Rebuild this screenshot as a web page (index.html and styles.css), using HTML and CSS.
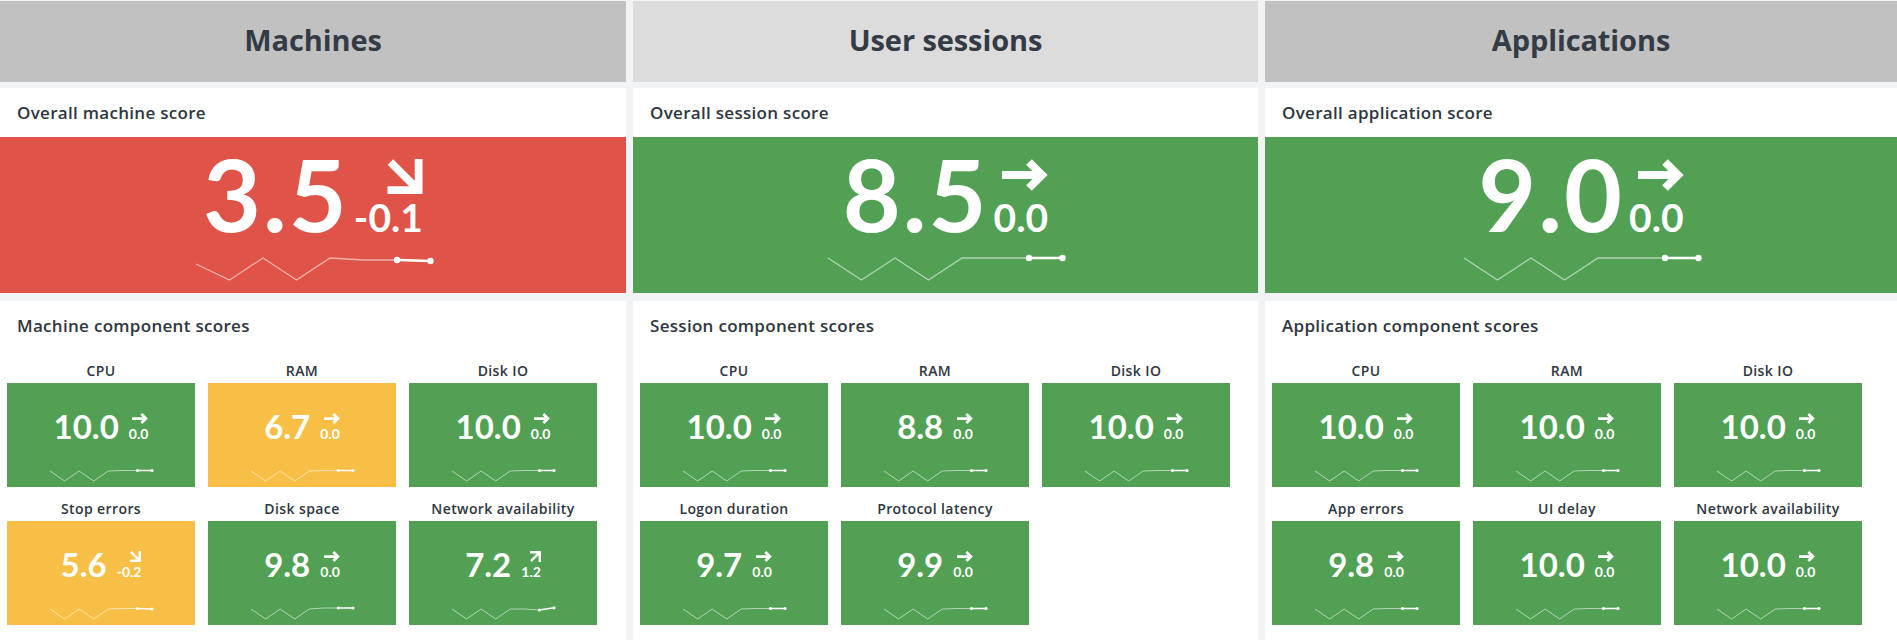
FILE: index.html
```html
<!DOCTYPE html>
<html lang="en">
<head>
<meta charset="utf-8">
<title>Scores</title>
<link rel="stylesheet" href="styles.css">
</head>
<body>
<svg class="defs" width="0" height="0" aria-hidden="true">
  <symbol id="arr-right" viewBox="0 0 46 32"><path d="M0 16 H40 M27 3 L40 16 L27 29" fill="none" stroke="#fff" stroke-width="8"/></symbol>
  <symbol id="arr-down" viewBox="0 0 36 36"><path d="M32 0 V32 H0 M3 3 L29 29" fill="none" stroke="#fff" stroke-width="8"/></symbol>
  <symbol id="arr-up" viewBox="0 0 36 36"><path d="M0 4 H32 V36 M3 33 L29 7" fill="none" stroke="#fff" stroke-width="8"/></symbol>
</svg>
<div class="board">
  <!-- Machines -->
  <section class="col">
    <header class="col-head">Machines</header>
    <div class="card overall">
      <div class="card-title">Overall machine score</div>
      <div class="score-big red">
        <div class="big-line"><span class="big-num">3.5</span><span class="big-delta"><svg class="arr-big-diag"><use href="#arr-down"/></svg><span>-0.1</span></span></div>
        <svg class="spark-big" viewBox="0 0 237 26"><polyline class="sl" points="1,9 34.5,25 68,3 101.5,25 135,3 168.5,5 202,5"/><line class="sh" x1="202" y1="5" x2="235.5" y2="6"/><circle cx="202" cy="5" r="3.2"/><circle cx="235.5" cy="6" r="3.2"/></svg>
      </div>
    </div>
    <div class="card components">
      <div class="card-title">Machine component scores</div>
      <div class="tiles">
        <div class="tile-item"><div class="tile-label">CPU</div><div class="tile green"><div class="tile-line"><span>10.0</span><span class="small-delta"><svg class="arr-s"><use href="#arr-right"/></svg><span>0.0</span></span></div><svg class="spark-s" viewBox="0 0 104 14"><polyline class="sl" points="1,2 15.6,12 30.1,2 44.7,12 59.3,2 73.9,1.5 88.4,1.5"/><line class="sh" x1="88.4" y1="1.5" x2="103" y2="1.5"/><circle cx="88.4" cy="1.5" r="1.6"/><circle cx="103" cy="1.5" r="1.6"/></svg></div></div>
        <div class="tile-item"><div class="tile-label">RAM</div><div class="tile yellow"><div class="tile-line"><span>6.7</span><span class="small-delta"><svg class="arr-s"><use href="#arr-right"/></svg><span>0.0</span></span></div><svg class="spark-s" viewBox="0 0 104 14"><polyline class="sl" points="1,2 15.6,12 30.1,2 44.7,12 59.3,2 73.9,1.5 88.4,1.5"/><line class="sh" x1="88.4" y1="1.5" x2="103" y2="1.5"/><circle cx="88.4" cy="1.5" r="1.6"/><circle cx="103" cy="1.5" r="1.6"/></svg></div></div>
        <div class="tile-item"><div class="tile-label">Disk IO</div><div class="tile green"><div class="tile-line"><span>10.0</span><span class="small-delta"><svg class="arr-s"><use href="#arr-right"/></svg><span>0.0</span></span></div><svg class="spark-s" viewBox="0 0 104 14"><polyline class="sl" points="1,2 15.6,12 30.1,2 44.7,12 59.3,2 73.9,1.5 88.4,1.5"/><line class="sh" x1="88.4" y1="1.5" x2="103" y2="1.5"/><circle cx="88.4" cy="1.5" r="1.6"/><circle cx="103" cy="1.5" r="1.6"/></svg></div></div>
        <div class="tile-item"><div class="tile-label">Stop errors</div><div class="tile yellow"><div class="tile-line"><span>5.6</span><span class="small-delta"><svg class="arr-sd"><use href="#arr-down"/></svg><span>-0.2</span></span></div><svg class="spark-s" viewBox="0 0 104 14"><polyline class="sl" points="1,2 15.6,12 30.1,2 44.7,12 59.3,2 73.9,1.5 88.4,1.5"/><line class="sh" x1="88.4" y1="1.5" x2="103" y2="2"/><circle cx="88.4" cy="1.5" r="1.6"/><circle cx="103" cy="2" r="1.6"/></svg></div></div>
        <div class="tile-item"><div class="tile-label">Disk space</div><div class="tile green"><div class="tile-line"><span>9.8</span><span class="small-delta"><svg class="arr-s"><use href="#arr-right"/></svg><span>0.0</span></span></div><svg class="spark-s" viewBox="0 0 104 14"><polyline class="sl" points="1,2 15.6,12 30.1,2 44.7,12 59.3,2 73.9,1 88.4,1"/><line class="sh" x1="88.4" y1="1" x2="103" y2="1"/><circle cx="88.4" cy="1" r="1.6"/><circle cx="103" cy="1" r="1.6"/></svg></div></div>
        <div class="tile-item"><div class="tile-label">Network availability</div><div class="tile green"><div class="tile-line"><span>7.2</span><span class="small-delta"><svg class="arr-sd"><use href="#arr-up"/></svg><span>1.2</span></span></div><svg class="spark-s" viewBox="0 0 104 14"><polyline class="sl" points="1,2 15.6,12 30.1,2 44.7,12 59.3,2 73.9,2 88.4,3"/><line class="sh" x1="88.4" y1="3" x2="103" y2="0.8"/><circle cx="88.4" cy="3" r="1.6"/><circle cx="103" cy="0.8" r="1.6"/></svg></div></div>
      </div>
    </div>
  </section>

  <!-- User sessions -->
  <section class="col">
    <header class="col-head light">User sessions</header>
    <div class="card overall">
      <div class="card-title">Overall session score</div>
      <div class="score-big green">
        <div class="big-line"><span class="big-num">8.5</span><span class="big-delta"><svg class="arr-big"><use href="#arr-right"/></svg><span>0.0</span></span></div>
        <svg class="spark-big" viewBox="0 0 237 26"><polyline class="sl" points="1,3 34.5,25 68,3 101.5,25 135,3 168.5,3 202,3"/><line class="sh" x1="202" y1="3" x2="235.5" y2="3"/><circle cx="202" cy="3" r="3.2"/><circle cx="235.5" cy="3" r="3.2"/></svg>
      </div>
    </div>
    <div class="card components">
      <div class="card-title">Session component scores</div>
      <div class="tiles">
        <div class="tile-item"><div class="tile-label">CPU</div><div class="tile green"><div class="tile-line"><span>10.0</span><span class="small-delta"><svg class="arr-s"><use href="#arr-right"/></svg><span>0.0</span></span></div><svg class="spark-s" viewBox="0 0 104 14"><polyline class="sl" points="1,2 15.6,12 30.1,2 44.7,12 59.3,2 73.9,1.5 88.4,1.5"/><line class="sh" x1="88.4" y1="1.5" x2="103" y2="1.5"/><circle cx="88.4" cy="1.5" r="1.6"/><circle cx="103" cy="1.5" r="1.6"/></svg></div></div>
        <div class="tile-item"><div class="tile-label">RAM</div><div class="tile green"><div class="tile-line"><span>8.8</span><span class="small-delta"><svg class="arr-s"><use href="#arr-right"/></svg><span>0.0</span></span></div><svg class="spark-s" viewBox="0 0 104 14"><polyline class="sl" points="1,2 15.6,12 30.1,2 44.7,12 59.3,2 73.9,1.5 88.4,1.5"/><line class="sh" x1="88.4" y1="1.5" x2="103" y2="1.5"/><circle cx="88.4" cy="1.5" r="1.6"/><circle cx="103" cy="1.5" r="1.6"/></svg></div></div>
        <div class="tile-item"><div class="tile-label">Disk IO</div><div class="tile green"><div class="tile-line"><span>10.0</span><span class="small-delta"><svg class="arr-s"><use href="#arr-right"/></svg><span>0.0</span></span></div><svg class="spark-s" viewBox="0 0 104 14"><polyline class="sl" points="1,2 15.6,12 30.1,2 44.7,12 59.3,2 73.9,1.5 88.4,1.5"/><line class="sh" x1="88.4" y1="1.5" x2="103" y2="1.5"/><circle cx="88.4" cy="1.5" r="1.6"/><circle cx="103" cy="1.5" r="1.6"/></svg></div></div>
        <div class="tile-item"><div class="tile-label">Logon duration</div><div class="tile green"><div class="tile-line"><span>9.7</span><span class="small-delta"><svg class="arr-s"><use href="#arr-right"/></svg><span>0.0</span></span></div><svg class="spark-s" viewBox="0 0 104 14"><polyline class="sl" points="1,2 15.6,12 30.1,2 44.7,12 59.3,2 73.9,1.5 88.4,1.5"/><line class="sh" x1="88.4" y1="1.5" x2="103" y2="1.5"/><circle cx="88.4" cy="1.5" r="1.6"/><circle cx="103" cy="1.5" r="1.6"/></svg></div></div>
        <div class="tile-item"><div class="tile-label">Protocol latency</div><div class="tile green"><div class="tile-line"><span>9.9</span><span class="small-delta"><svg class="arr-s"><use href="#arr-right"/></svg><span>0.0</span></span></div><svg class="spark-s" viewBox="0 0 104 14"><polyline class="sl" points="1,2 15.6,12 30.1,2 44.7,12 59.3,2 73.9,1.5 88.4,1.5"/><line class="sh" x1="88.4" y1="1.5" x2="103" y2="1.5"/><circle cx="88.4" cy="1.5" r="1.6"/><circle cx="103" cy="1.5" r="1.6"/></svg></div></div>
      </div>
    </div>
  </section>

  <!-- Applications -->
  <section class="col">
    <header class="col-head">Applications</header>
    <div class="card overall">
      <div class="card-title">Overall application score</div>
      <div class="score-big green">
        <div class="big-line"><span class="big-num">9.0</span><span class="big-delta"><svg class="arr-big"><use href="#arr-right"/></svg><span>0.0</span></span></div>
        <svg class="spark-big" viewBox="0 0 237 26"><polyline class="sl" points="1,3 34.5,25 68,3 101.5,25 135,3 168.5,3 202,3"/><line class="sh" x1="202" y1="3" x2="235.5" y2="3"/><circle cx="202" cy="3" r="3.2"/><circle cx="235.5" cy="3" r="3.2"/></svg>
      </div>
    </div>
    <div class="card components">
      <div class="card-title">Application component scores</div>
      <div class="tiles">
        <div class="tile-item"><div class="tile-label">CPU</div><div class="tile green"><div class="tile-line"><span>10.0</span><span class="small-delta"><svg class="arr-s"><use href="#arr-right"/></svg><span>0.0</span></span></div><svg class="spark-s" viewBox="0 0 104 14"><polyline class="sl" points="1,2 15.6,12 30.1,2 44.7,12 59.3,2 73.9,1.5 88.4,1.5"/><line class="sh" x1="88.4" y1="1.5" x2="103" y2="1.5"/><circle cx="88.4" cy="1.5" r="1.6"/><circle cx="103" cy="1.5" r="1.6"/></svg></div></div>
        <div class="tile-item"><div class="tile-label">RAM</div><div class="tile green"><div class="tile-line"><span>10.0</span><span class="small-delta"><svg class="arr-s"><use href="#arr-right"/></svg><span>0.0</span></span></div><svg class="spark-s" viewBox="0 0 104 14"><polyline class="sl" points="1,2 15.6,12 30.1,2 44.7,12 59.3,2 73.9,1.5 88.4,1.5"/><line class="sh" x1="88.4" y1="1.5" x2="103" y2="1.5"/><circle cx="88.4" cy="1.5" r="1.6"/><circle cx="103" cy="1.5" r="1.6"/></svg></div></div>
        <div class="tile-item"><div class="tile-label">Disk IO</div><div class="tile green"><div class="tile-line"><span>10.0</span><span class="small-delta"><svg class="arr-s"><use href="#arr-right"/></svg><span>0.0</span></span></div><svg class="spark-s" viewBox="0 0 104 14"><polyline class="sl" points="1,2 15.6,12 30.1,2 44.7,12 59.3,2 73.9,1.5 88.4,1.5"/><line class="sh" x1="88.4" y1="1.5" x2="103" y2="1.5"/><circle cx="88.4" cy="1.5" r="1.6"/><circle cx="103" cy="1.5" r="1.6"/></svg></div></div>
        <div class="tile-item"><div class="tile-label">App errors</div><div class="tile green"><div class="tile-line"><span>9.8</span><span class="small-delta"><svg class="arr-s"><use href="#arr-right"/></svg><span>0.0</span></span></div><svg class="spark-s" viewBox="0 0 104 14"><polyline class="sl" points="1,2 15.6,12 30.1,2 44.7,12 59.3,2 73.9,1.5 88.4,1.5"/><line class="sh" x1="88.4" y1="1.5" x2="103" y2="1.5"/><circle cx="88.4" cy="1.5" r="1.6"/><circle cx="103" cy="1.5" r="1.6"/></svg></div></div>
        <div class="tile-item"><div class="tile-label">UI delay</div><div class="tile green"><div class="tile-line"><span>10.0</span><span class="small-delta"><svg class="arr-s"><use href="#arr-right"/></svg><span>0.0</span></span></div><svg class="spark-s" viewBox="0 0 104 14"><polyline class="sl" points="1,2 15.6,12 30.1,2 44.7,12 59.3,2 73.9,1.5 88.4,1.5"/><line class="sh" x1="88.4" y1="1.5" x2="103" y2="1.5"/><circle cx="88.4" cy="1.5" r="1.6"/><circle cx="103" cy="1.5" r="1.6"/></svg></div></div>
        <div class="tile-item"><div class="tile-label">Network availability</div><div class="tile green"><div class="tile-line"><span>10.0</span><span class="small-delta"><svg class="arr-s"><use href="#arr-right"/></svg><span>0.0</span></span></div><svg class="spark-s" viewBox="0 0 104 14"><polyline class="sl" points="1,2 15.6,12 30.1,2 44.7,12 59.3,2 73.9,1.5 88.4,1.5"/><line class="sh" x1="88.4" y1="1.5" x2="103" y2="1.5"/><circle cx="88.4" cy="1.5" r="1.6"/><circle cx="103" cy="1.5" r="1.6"/></svg></div></div>
      </div>
    </div>
  </section>
</div>
</body>
</html>
```

FILE: styles.css
```css
html, body {
  margin: 0;
  padding: 0;
}

body {
  background: #f2f3f5;
  font-family: Lato, "Noto Sans", sans-serif;
  color: #2e3640;
  overflow: hidden;
}

.defs {
  position: absolute;
  width: 0;
  height: 0;
  overflow: hidden;
}

.board {
  display: grid;
  grid-template-columns: 626px 625px 1fr;
  column-gap: 7px;
  padding-top: 1px;
  height: 100vh;
  box-sizing: border-box;
}

.col {
  display: flex;
  flex-direction: column;
  min-width: 0;
}

.col-head {
  height: 81px;
  box-sizing: border-box;
  padding-bottom: 4px;
  display: flex;
  align-items: center;
  justify-content: center;
  background: #c1c1c1;
  color: #333c46;
  font-family: "Open Sans", Lato, sans-serif;
  font-size: 29px;
  font-weight: 700;
  letter-spacing: -0.1px;
}

.col-head.light {
  background: #dcdcdc;
}

.card {
  background: #fff;
}

.overall {
  margin-top: 6px;
}

.card-title {
  font-family: "Open Sans", Lato, sans-serif;
  font-size: 17px;
  line-height: 20px;
  font-weight: 600;
  letter-spacing: 0.3px;
  color: #2e3640;
  padding: 15px 17px 14px;
}

.score-big {
  height: 156px;
  box-sizing: border-box;
  padding-top: 6px;
  text-align: center;
  color: #fff;
}

.red { background: #df5348; }
.green { background: #52a054; }
.yellow { background: #f7bf45; }

.big-line {
  height: 100px;
  font-size: 100px;
  line-height: 1;
  font-weight: 700;
  white-space: nowrap;
}

.big-num {
  letter-spacing: 2px;
}

.big-delta {
  display: inline-block;
  margin-left: 5px;
  font-size: 39px;
  line-height: 39px;
  text-align: right;
}

.big-delta svg {
  display: block;
  margin: 0 0 4px auto;
  overflow: visible;
}

.arr-big {
  width: 46px;
  height: 32px;
  margin-bottom: 7px !important;
}

.arr-big-diag {
  width: 36px;
  height: 35px;
}

.spark-big {
  display: block;
  width: 237px;
  height: 26px;
  margin: 12px auto 0;
  overflow: visible;
}

.sl {
  fill: none;
  stroke: rgba(255, 255, 255, 0.55);
  stroke-width: 1.3;
}

.sh {
  stroke: #fff;
  stroke-width: 2.6;
}

.spark-big circle,
.spark-s circle {
  fill: #fff;
}

.spark-s .sh {
  stroke-width: 1.5;
}

.spark-s .sl {
  stroke-width: 1;
}

.components {
  margin-top: 8px;
  flex: 1;
}

.components .card-title {
  padding-bottom: 0;
}

.tiles {
  display: grid;
  grid-template-columns: repeat(3, 188px);
  column-gap: 13px;
  row-gap: 13px;
  padding: 26px 7px 0;
}

.tile-label {
  font-family: "Open Sans", Lato, sans-serif;
  font-size: 14px;
  line-height: 18px;
  font-weight: 600;
  letter-spacing: 0.4px;
  text-align: center;
  color: #2e3640;
  margin-bottom: 3px;
  white-space: nowrap;
}

.tile {
  height: 104px;
  box-sizing: border-box;
  padding-top: 27px;
  color: #fff;
  text-align: center;
}

.tile-line {
  height: 33px;
  font-size: 33px;
  line-height: 33px;
  font-weight: 700;
  white-space: nowrap;
}

.small-delta {
  display: inline-block;
  margin-left: 10px;
  font-size: 14px;
  line-height: 14px;
  text-align: right;
}

.small-delta svg {
  display: block;
  margin: 0 0 3px auto;
  overflow: visible;
}

.arr-s {
  width: 16px;
  height: 11px;
}

.arr-sd {
  width: 11px;
  height: 11px;
}

.spark-s {
  display: block;
  width: 104px;
  height: 14px;
  margin: 26px auto 0;
  overflow: visible;
}
```
